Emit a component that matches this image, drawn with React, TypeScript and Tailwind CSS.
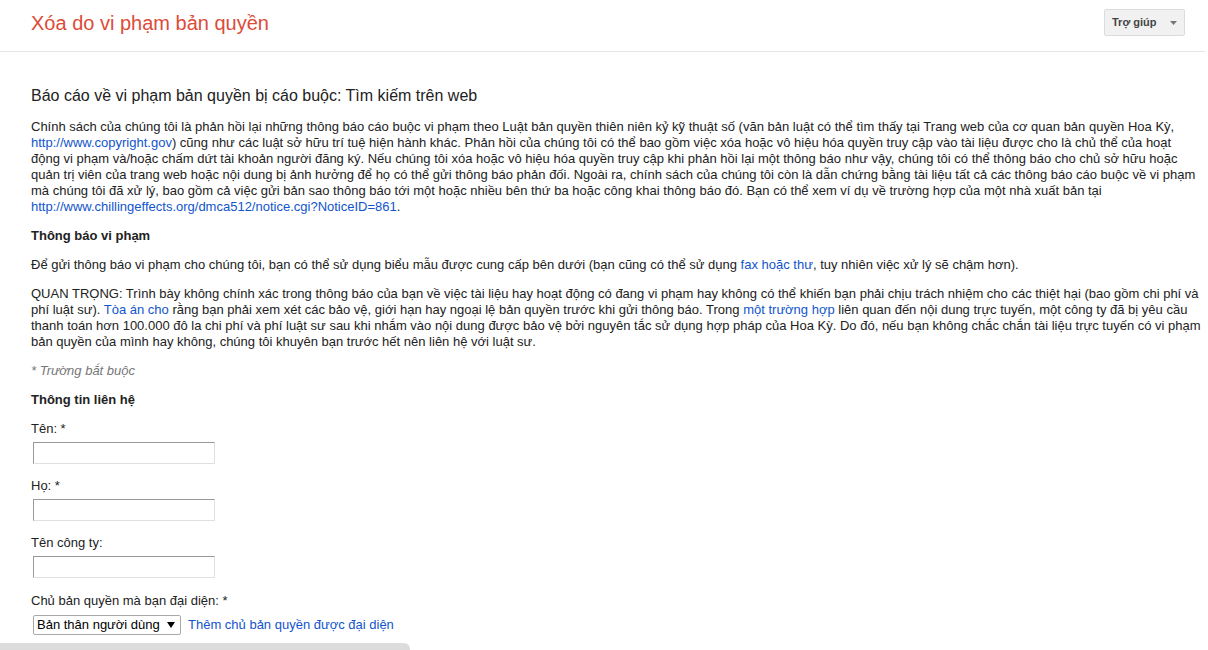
const LINK = 'text-[#1155cc]';

function Field({ label, last }: { label: string; last?: boolean }) {
  return (
    <div className={last ? 'mb-[15px]' : 'mb-[14px]'}>
      <div className="h-[16px] leading-[16px]">{label}</div>
      <input
        type="text"
        className="mt-[5px] ml-[2px] block w-[182px] h-[22px] bg-white border border-[#e0e0e0] border-t-[#999] border-l-[#999] outline-none"
      />
    </div>
  );
}

export default function App() {
  return (
    <div
      className="w-[1208px] h-[650px] flex flex-col overflow-hidden bg-white text-[13px] text-[#222]"
      style={{ fontFamily: '"Liberation Sans", Arial, sans-serif' }}
    >
      <div className="w-[1205px] h-[52px] shrink-0 flex items-center justify-between pl-[31px] pr-[20px] border-b border-[#e5e5e5]">
        <h1 className="text-[20px] text-[#dd4b39] -mt-[6px]">Xóa do vi phạm bản quyền</h1>
        <button className="-mt-[6px] w-[81px] h-[27px] flex items-center justify-between pl-[7px] pr-[7px] rounded-[2px] border border-[#dcdcdc] bg-[#f1f1f1] text-[11px] font-bold text-[#444]">
          Trợ giúp
          <svg width="7" height="4" viewBox="0 0 7 4"><path d="M0 0h7L3.5 4z" fill="#777" /></svg>
        </button>
      </div>

      <div className="flex-1 overflow-hidden pl-[31px] w-[1212px]">
        <h2 className="mt-[34px] text-[16px] leading-[20px] text-[#222]">
          Báo cáo về vi phạm bản quyền bị cáo buộc: Tìm kiếm trên web
        </h2>

        {/* line breaks follow the reference wrapping */}
        <p className="mt-[13px] leading-[16px]">
          Chính sách của chúng tôi là phản hồi lại những thông báo cáo buộc vi phạm theo Luật bản quyền thiên niên kỷ kỹ thuật số (văn bản luật có thể tìm thấy tại Trang web của cơ quan bản quyền Hoa Kỳ,
          <br />
          <a className={LINK}>http://www.copyright.gov</a>) cũng như các luật sở hữu trí tuệ hiện hành khác. Phản hồi của chúng tôi có thể bao gồm việc xóa hoặc vô hiệu hóa quyền truy cập vào tài liệu được cho là chủ thể của hoạt
          <br />
          động vi phạm và/hoặc chấm dứt tài khoản người đăng ký. Nếu chúng tôi xóa hoặc vô hiệu hóa quyền truy cập khi phản hồi lại một thông báo như vậy, chúng tôi có thể thông báo cho chủ sở hữu hoặc
          <br />
          quản trị viên của trang web hoặc nội dung bị ảnh hưởng để họ có thể gửi thông báo phản đối. Ngoài ra, chính sách của chúng tôi còn là dẫn chứng bằng tài liệu tất cả các thông báo cáo buộc về vi phạm
          <br />
          mà chúng tôi đã xử lý, bao gồm cả việc gửi bản sao thông báo tới một hoặc nhiều bên thứ ba hoặc công khai thông báo đó. Bạn có thể xem ví dụ về trường hợp của một nhà xuất bản tại
          <br />
          <a className={LINK}>http://www.chillingeffects.org/dmca512/notice.cgi?NoticeID=861</a>.
        </p>

        <h3 className="mt-[13px] font-bold leading-[16px]">Thông báo vi phạm</h3>

        <p className="mt-[13px] leading-[16px]">
          Để gửi thông báo vi phạm cho chúng tôi, bạn có thể sử dụng biểu mẫu được cung cấp bên dưới (bạn cũng có thể sử dụng{' '}
          <a className={LINK}>fax hoặc thư</a>, tuy nhiên việc xử lý sẽ chậm hơn).
        </p>

        <p className="mt-[13px] leading-[16px]">
          QUAN TRỌNG: Trình bày không chính xác trong thông báo của bạn về việc tài liệu hay hoạt động có đang vi phạm hay không có thể khiến bạn phải chịu trách nhiệm cho các thiệt hại (bao gồm chi phí và
          <br />
          phí luật sư). <a className={LINK}>Tòa án cho</a> rằng bạn phải xem xét các bảo vệ, giới hạn hay ngoại lệ bản quyền trước khi gửi thông báo. Trong{' '}
          <a className={LINK}>một trường hợp</a> liên quan đến nội dung trực tuyến, một công ty đã bị yêu cầu
          <br />
          thanh toán hơn 100.000 đô la chi phí và phí luật sư sau khi nhắm vào nội dung được bảo vệ bởi nguyên tắc sử dụng hợp pháp của Hoa Kỳ. Do đó, nếu bạn không chắc chắn tài liệu trực tuyến có vi phạm
          <br />
          bản quyền của mình hay không, chúng tôi khuyên bạn trước hết nên liên hệ với luật sư.
        </p>

        <p className="mt-[13px] leading-[16px] italic text-[#777]">* Trường bắt buộc</p>

        <h3 className="mt-[13px] font-bold leading-[16px]">Thông tin liên hệ</h3>

        <div className="mt-[13px]">
          <Field label="Tên: *" />
          <Field label="Họ: *" />
          <Field label="Tên công ty:" last />
          <div className="h-[16px] leading-[16px]">Chủ bản quyền mà bạn đại diện: *</div>
          <div className="mt-[6px] ml-[2px] flex items-center gap-[7px]">
            <div className="w-[148px] h-[20px] flex items-center justify-between pl-[3px] pr-[5px] border border-[#a9a9a9] rounded-[2px] bg-white text-[13px] text-[#000]">
              Bản thân người dùng
              <svg width="8" height="6" viewBox="0 0 8 6"><path d="M0 0h8L4 6z" fill="#000" /></svg>
            </div>
            <a className={LINK}>Thêm chủ bản quyền được đại diện</a>
          </div>
        </div>
      </div>

      <div className="h-[7px] shrink-0">
        <div className="w-[410px] h-[7px] bg-[#dcdcdc] rounded-tr-[6px]" />
      </div>
    </div>
  );
}
